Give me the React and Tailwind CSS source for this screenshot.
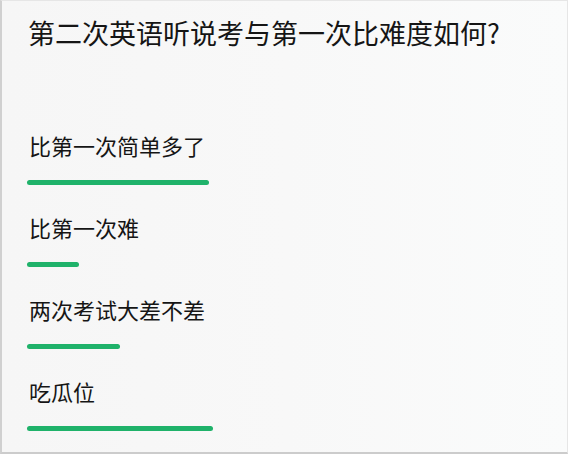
export default function App() {
    const options = [
        { label: "比第一次简单多了", width: 182 },
        { label: "比第一次难", width: 52 },
        { label: "两次考试大差不差", width: 93 },
        { label: "吃瓜位", width: 186 },
    ];

    return (
        <div
            className="h-[454px] w-[568px] overflow-hidden bg-gradient-to-r from-[#f6f6f6] via-[#f8f8f8] to-[#fafbfb] border-l-2 border-b-2 border-t border-r border-l-[#d0d0d0] border-b-[#cccccc] border-t-[#e6e6e6] border-r-[#e6e6e6] text-[#151515]"
            style={{ fontFamily: '"Noto Sans CJK SC", "Noto Sans", sans-serif' }}
        >
            <div className="pl-[25px] pt-[14px] flex flex-col">
                <h1 className="ml-[1px] text-[27px] leading-[36px] font-normal">
                    第二次英语听说考与第一次比难度如何?
                </h1>
                <div className="mt-[79px] flex flex-col gap-[27px]">
                    {options.map((o) => (
                        <div key={o.label} className="flex flex-col">
                            <p className="ml-[2px] text-[22px] leading-[30px]">{o.label}</p>
                            <div
                                className="mt-[20px] h-[5px] rounded-full bg-[#1fb26a]"
                                style={{ width: o.width }}
                            />
                        </div>
                    ))}
                </div>
            </div>
        </div>
    );
}
